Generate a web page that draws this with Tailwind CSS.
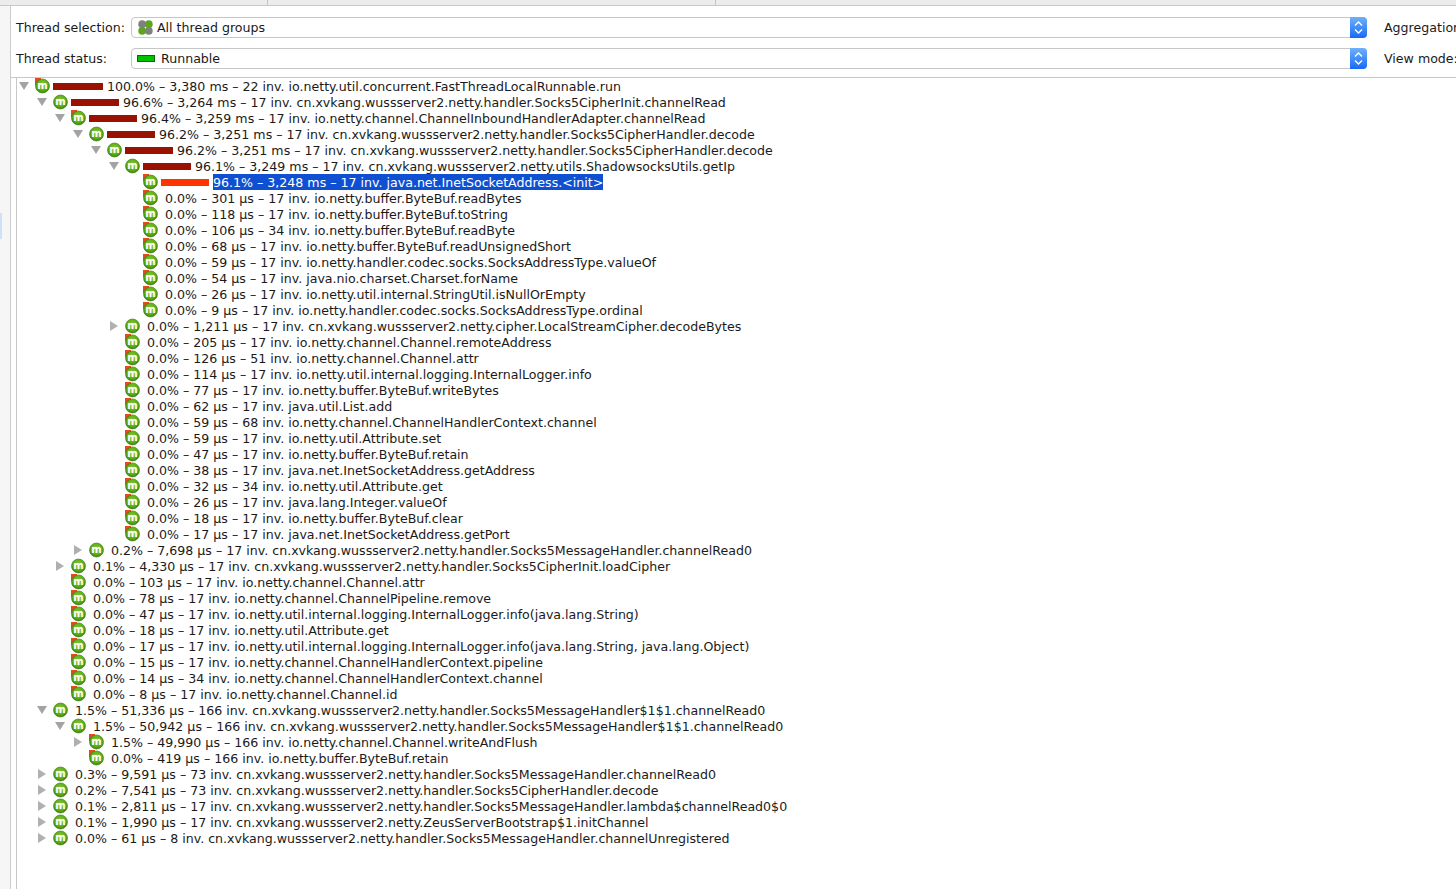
<!DOCTYPE html>
<html lang="en">
<head>
  <meta charset="UTF-8">
  <title>CPU Call Tree</title>
  <script src="https://cdn.jsdelivr.net/npm/@tailwindcss/browser@4"></script>
</head>
<body class="bg-white overflow-hidden">
  <div class="h-[889px] w-[1456px] flex flex-col overflow-hidden font-['DejaVu_Sans',sans-serif] text-[12.6px] text-[#1a1a1a]">
    <!-- cut off tab strip -->
    <div class="h-[6px] shrink-0 bg-[#ececec] border-b border-[#c8c8c8] flex">
      <div class="w-[268px] border-r border-[#c4c4c4]"></div>
      <div class="w-[448px] border-r border-[#c4c4c4]"></div>
    </div>
    <div class="flex flex-1 min-h-0">
      <div class="w-[11px] shrink-0 bg-[#f6f6f6] border-r border-[#cccccc] pt-[207px]">
        <div class="w-[2px] h-[26px] bg-[#cfe2f5]"></div>
      </div>
      <div class="flex-1 min-w-0 flex flex-col">
        <div class="h-[72px] shrink-0 border-b border-[#c8c8c8] pl-[5px] pt-[11px] flex flex-col gap-[10px] overflow-hidden">
          <div class="flex items-center h-[21px]">
            <span class="w-[115px] pt-[2px] shrink-0 whitespace-nowrap">Thread selection:</span>
            <div class="w-[1236px] shrink-0 h-[21px] flex items-center border border-[#c6c6c6] rounded-[4px] relative pl-[6px]">
              <svg width="15" height="15" viewBox="0 0 15 15">
                <circle cx="4.2" cy="4.2" r="3.9" fill="#808080"/><circle cx="10.8" cy="4.2" r="3.9" fill="#5da51e"/>
                <circle cx="4.2" cy="10.8" r="3.9" fill="#5da51e"/><circle cx="10.8" cy="10.8" r="3.9" fill="#808080"/>
              </svg>
              <span class="ml-[4px] pt-[2px]">All thread groups</span>
              <div class="absolute right-[-1px] top-[-1px] w-[17px] h-[21px] rounded-r-[4px] bg-gradient-to-b from-[#6db0fa] to-[#1669f7] flex items-center justify-center">
                <svg width="9" height="15" viewBox="0 0 9 15" fill="none" stroke="white" stroke-width="1.4"><path d="M1 5.5 4.5 2 8 5.5M1 9.5 4.5 13 8 9.5"/></svg>
              </div>
            </div>
            <span class="ml-[17px] pt-[2px] shrink-0 whitespace-nowrap">Aggregation level:</span>
          </div>
          <div class="flex items-center h-[21px]">
            <span class="w-[115px] pt-[2px] shrink-0 whitespace-nowrap">Thread status:</span>
            <div class="w-[1236px] shrink-0 h-[21px] flex items-center border border-[#c6c6c6] rounded-[4px] relative pl-[5px]">
              <div class="w-[18px] h-[7px] bg-[#00c000] border border-[#0a6a0a]"></div>
              <span class="ml-[6px] pt-[2px]">Runnable</span>
              <div class="absolute right-[-1px] top-[-1px] w-[17px] h-[21px] rounded-r-[4px] bg-gradient-to-b from-[#6db0fa] to-[#1669f7] flex items-center justify-center">
                <svg width="9" height="15" viewBox="0 0 9 15" fill="none" stroke="white" stroke-width="1.4"><path d="M1 5.5 4.5 2 8 5.5M1 9.5 4.5 13 8 9.5"/></svg>
              </div>
            </div>
            <span class="ml-[17px] pt-[2px] shrink-0 whitespace-nowrap">View mode:</span>
          </div>
        </div>
        <div class="ml-[5px] flex-1 border-l border-[#c8c8c8]">
          <div id="tree"></div>
        </div>
      </div>
    </div>
  </div>

  <svg width="0" height="0" class="absolute">
    <defs>
      <radialGradient id="ball" cx="0.5" cy="0.42" r="0.55">
        <stop offset="0" stop-color="#8ccf3a"/>
        <stop offset="0.7" stop-color="#62ad1c"/>
        <stop offset="1" stop-color="#3d8a0e"/>
      </radialGradient>
    </defs>
  </svg>

  <script>
    // level, arrow (d = open, r = closed, '' = leaf), bar width, text
    const rows = [
      [0, 'd', 50, '100.0% – 3,380 ms – 22 inv. io.netty.util.concurrent.FastThreadLocalRunnable.run'],
      [1, 'd', 48, '96.6% – 3,264 ms – 17 inv. cn.xvkang.wussserver2.netty.handler.Socks5CipherInit.channelRead'],
      [2, 'd', 48, '96.4% – 3,259 ms – 17 inv. io.netty.channel.ChannelInboundHandlerAdapter.channelRead'],
      [3, 'd', 48, '96.2% – 3,251 ms – 17 inv. cn.xvkang.wussserver2.netty.handler.Socks5CipherHandler.decode'],
      [4, 'd', 48, '96.2% – 3,251 ms – 17 inv. cn.xvkang.wussserver2.netty.handler.Socks5CipherHandler.decode'],
      [5, 'd', 48, '96.1% – 3,249 ms – 17 inv. cn.xvkang.wussserver2.netty.utils.ShadowsocksUtils.getIp'],
      [6, '', 48, '96.1% – 3,248 ms – 17 inv. java.net.InetSocketAddress.<init>', true],
      [6, '', 0, '0.0% – 301 μs – 17 inv. io.netty.buffer.ByteBuf.readBytes'],
      [6, '', 0, '0.0% – 118 μs – 17 inv. io.netty.buffer.ByteBuf.toString'],
      [6, '', 0, '0.0% – 106 μs – 34 inv. io.netty.buffer.ByteBuf.readByte'],
      [6, '', 0, '0.0% – 68 μs – 17 inv. io.netty.buffer.ByteBuf.readUnsignedShort'],
      [6, '', 0, '0.0% – 59 μs – 17 inv. io.netty.handler.codec.socks.SocksAddressType.valueOf'],
      [6, '', 0, '0.0% – 54 μs – 17 inv. java.nio.charset.Charset.forName'],
      [6, '', 0, '0.0% – 26 μs – 17 inv. io.netty.util.internal.StringUtil.isNullOrEmpty'],
      [6, '', 0, '0.0% – 9 μs – 17 inv. io.netty.handler.codec.socks.SocksAddressType.ordinal'],
      [5, 'r', 0, '0.0% – 1,211 μs – 17 inv. cn.xvkang.wussserver2.netty.cipher.LocalStreamCipher.decodeBytes'],
      [5, '', 0, '0.0% – 205 μs – 17 inv. io.netty.channel.Channel.remoteAddress'],
      [5, '', 0, '0.0% – 126 μs – 51 inv. io.netty.channel.Channel.attr'],
      [5, '', 0, '0.0% – 114 μs – 17 inv. io.netty.util.internal.logging.InternalLogger.info'],
      [5, '', 0, '0.0% – 77 μs – 17 inv. io.netty.buffer.ByteBuf.writeBytes'],
      [5, '', 0, '0.0% – 62 μs – 17 inv. java.util.List.add'],
      [5, '', 0, '0.0% – 59 μs – 68 inv. io.netty.channel.ChannelHandlerContext.channel'],
      [5, '', 0, '0.0% – 59 μs – 17 inv. io.netty.util.Attribute.set'],
      [5, '', 0, '0.0% – 47 μs – 17 inv. io.netty.buffer.ByteBuf.retain'],
      [5, '', 0, '0.0% – 38 μs – 17 inv. java.net.InetSocketAddress.getAddress'],
      [5, '', 0, '0.0% – 32 μs – 34 inv. io.netty.util.Attribute.get'],
      [5, '', 0, '0.0% – 26 μs – 17 inv. java.lang.Integer.valueOf'],
      [5, '', 0, '0.0% – 18 μs – 17 inv. io.netty.buffer.ByteBuf.clear'],
      [5, '', 0, '0.0% – 17 μs – 17 inv. java.net.InetSocketAddress.getPort'],
      [3, 'r', 0, '0.2% – 7,698 μs – 17 inv. cn.xvkang.wussserver2.netty.handler.Socks5MessageHandler.channelRead0'],
      [2, 'r', 0, '0.1% – 4,330 μs – 17 inv. cn.xvkang.wussserver2.netty.handler.Socks5CipherInit.loadCipher'],
      [2, '', 0, '0.0% – 103 μs – 17 inv. io.netty.channel.Channel.attr'],
      [2, '', 0, '0.0% – 78 μs – 17 inv. io.netty.channel.ChannelPipeline.remove'],
      [2, '', 0, '0.0% – 47 μs – 17 inv. io.netty.util.internal.logging.InternalLogger.info(java.lang.String)'],
      [2, '', 0, '0.0% – 18 μs – 17 inv. io.netty.util.Attribute.get'],
      [2, '', 0, '0.0% – 17 μs – 17 inv. io.netty.util.internal.logging.InternalLogger.info(java.lang.String, java.lang.Object)'],
      [2, '', 0, '0.0% – 15 μs – 17 inv. io.netty.channel.ChannelHandlerContext.pipeline'],
      [2, '', 0, '0.0% – 14 μs – 34 inv. io.netty.channel.ChannelHandlerContext.channel'],
      [2, '', 0, '0.0% – 8 μs – 17 inv. io.netty.channel.Channel.id'],
      [1, 'd', 0, '1.5% – 51,336 μs – 166 inv. cn.xvkang.wussserver2.netty.handler.Socks5MessageHandler$1$1.channelRead0'],
      [2, 'd', 0, '1.5% – 50,942 μs – 166 inv. cn.xvkang.wussserver2.netty.handler.Socks5MessageHandler$1$1.channelRead0'],
      [3, 'r', 0, '1.5% – 49,990 μs – 166 inv. io.netty.channel.Channel.writeAndFlush'],
      [3, '', 0, '0.0% – 419 μs – 166 inv. io.netty.buffer.ByteBuf.retain'],
      [1, 'r', 0, '0.3% – 9,591 μs – 73 inv. cn.xvkang.wussserver2.netty.handler.Socks5MessageHandler.channelRead0'],
      [1, 'r', 0, '0.2% – 7,541 μs – 73 inv. cn.xvkang.wussserver2.netty.handler.Socks5CipherHandler.decode'],
      [1, 'r', 0, '0.1% – 2,811 μs – 17 inv. cn.xvkang.wussserver2.netty.handler.Socks5MessageHandler.lambda$channelRead0$0'],
      [1, 'r', 0, '0.1% – 1,990 μs – 17 inv. cn.xvkang.wussserver2.netty.ZeusServerBootstrap$1.initChannel'],
      [1, 'r', 0, '0.0% – 61 μs – 8 inv. cn.xvkang.wussserver2.netty.handler.Socks5MessageHandler.channelUnregistered'],
    ];

    const arrows = {
      d: '<svg width="10" height="8" viewBox="0 0 10 8"><path d="M0 0H10L5 8Z" fill="#a3a3a3"/></svg>',
      r: '<svg width="8" height="10" viewBox="0 0 8 10"><path d="M0 0V10L8 5Z" fill="#b0b0b0"/></svg>',
      '': ''
    };

    function methodIcon(text) {
      const ours = text.includes(' cn.xvkang');
      return `<svg width="16" height="16" viewBox="0 0 16 16" class="shrink-0">
        ${ours ? '' : '<rect x="1" y="0" width="6" height="7" fill="#e8481c"/>'}
        <circle cx="8.5" cy="8" r="7" fill="url(#ball)" stroke="#3a7d0c" stroke-width="0.6"/>
        <text x="8.5" y="11" text-anchor="middle" font-size="10" font-weight="700" fill="#fff" font-family="DejaVu Sans">m</text>
      </svg>`;
    }

    const escapeHtml = s => s.replace(/</g, '&lt;').replace(/>/g, '&gt;');

    document.getElementById('tree').innerHTML = rows.map(([level, arrow, bar, text, selected]) => `
      <div class="h-4 flex items-center whitespace-nowrap" style="padding-left:${level * 18}px">
        <div class="w-[14px] mr-[3px] h-4 flex items-center justify-center shrink-0">${arrows[arrow]}</div>
        ${methodIcon(text)}
        ${bar ? `<div class="h-[7px] ml-[3px] ${selected ? 'bg-[#ff3300]' : 'bg-[#991100]'}" style="width:${bar}px"></div>` : ''}
        <span class="${bar ? 'ml-[4px]' : 'ml-[7px]'} ${selected ? 'bg-[#0f50d2] text-white' : ''} pt-[2px] leading-[14px]">${escapeHtml(text)}</span>
      </div>`).join('');
  </script>
</body>
</html>
